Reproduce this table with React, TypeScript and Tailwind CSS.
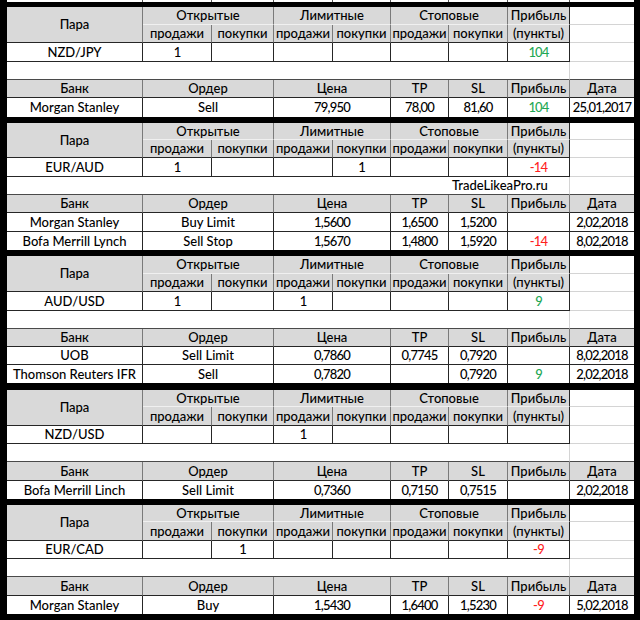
import React from "react";

type CellProps = { c?: string; children?: React.ReactNode };
function Cell({ c = "", children }: CellProps) {
  return (
    <div className={`flex items-center justify-center whitespace-nowrap leading-none ${c}`}>
      {children}
    </div>
  );
}

const COLS = "grid grid-cols-[136px_69px_62px_59px_58px_58px_59px_62px_64px]";
const H1 = "bg-[#d9d9d9] border-r border-r-[#7a7a7a] border-b border-b-[#f0f0f0]";
const H1P = "bg-[#d9d9d9] border-r border-r-[#262626] border-b border-b-[#f0f0f0]";
const H2 = "bg-[#d9d9d9] border-r border-r-[#7a7a7a] border-b border-b-[#262626]";
const H2P = "bg-[#d9d9d9] border-r border-r-[#262626] border-b border-b-[#262626]";
const HD = "bg-[#d9d9d9] border-b border-b-[#262626]";
const D = "bg-white border-r border-r-[#262626] border-b border-b-[#262626]";
const DL = "bg-white border-r border-r-[#262626]";
const DW = "bg-white border-b border-b-[#d4d4d4]";
const NUM = "tracking-[-0.8px]";
const GREEN = "text-[#1fa855]";
const RED = "text-[#ff1f1f]";

type Bank = {
  bank: string;
  order: string;
  price: string;
  tp: string;
  sl: string;
  profit: string;
  pc: string;
  date: string;
};

type BlockProps = {
  rows: string;
  pair: string;
  vals: string[];
  profit: string;
  pc: string;
  note?: string;
  banks: Bank[];
};

function Block({ rows, pair, vals, profit, pc, note, banks }: BlockProps) {
  return (
    <div className={`${COLS} ${rows} shrink-0`}>
      {/* header row 1 */}
      <Cell c="row-span-2 bg-[#d9d9d9] border-r border-r-[#7a7a7a] border-b border-b-[#262626]">Пара</Cell>
      <Cell c={`col-span-2 ${H1}`}>Открытые</Cell>
      <Cell c={`col-span-2 ${H1}`}>Лимитные</Cell>
      <Cell c={`col-span-2 ${H1}`}>Стоповые</Cell>
      <Cell c={H1P}>Прибыль</Cell>
      <Cell c={DW} />
      {/* header row 2 */}
      <Cell c={H2}>продажи</Cell>
      <Cell c={H2}>покупки</Cell>
      <Cell c={H2}>продажи</Cell>
      <Cell c={H2}>покупки</Cell>
      <Cell c={H2}>продажи</Cell>
      <Cell c={H2}>покупки</Cell>
      <Cell c={H2P}>(пункты)</Cell>
      <Cell c={DW} />
      {/* data row */}
      <Cell c={D}>{pair}</Cell>
      {vals.map((v, i) => (
        <Cell key={i} c={`${D} ${NUM}`}>
          {v}
        </Cell>
      ))}
      <Cell c={`${D} ${NUM} ${pc}`}>{profit}</Cell>
      <Cell c={DW} />
      {/* empty row */}
      {note ? (
        <>
          <div className="col-span-6 bg-white border-b border-b-[#4a4a4a]" />
          <div className="col-span-2 bg-white border-r border-r-[#d4d4d4] border-b border-b-[#4a4a4a] flex items-center pl-[3px] whitespace-nowrap leading-none">
            {note}
          </div>
        </>
      ) : (
        <div className="col-span-8 bg-white border-r border-r-[#d4d4d4] border-b border-b-[#4a4a4a]" />
      )}
      <div className="bg-white border-b border-b-[#4a4a4a]" />
      {/* bank header */}
      <Cell c={H2}>Банк</Cell>
      <Cell c={`col-span-2 ${H2}`}>Ордер</Cell>
      <Cell c={`col-span-2 ${H2}`}>Цена</Cell>
      <Cell c={H2}>TP</Cell>
      <Cell c={H2}>SL</Cell>
      <Cell c={H2}>Прибыль</Cell>
      <Cell c={HD}>Дата</Cell>
      {banks.map((b, i) => {
        const last = i === banks.length - 1;
        const cc = last ? DL : D;
        const dc = last ? "bg-white" : "bg-white border-b border-b-[#262626]";
        return (
          <React.Fragment key={i}>
            <Cell c={cc}>{b.bank}</Cell>
            <Cell c={`col-span-2 ${cc}`}>{b.order}</Cell>
            <Cell c={`col-span-2 ${cc} ${NUM}`}>{b.price}</Cell>
            <Cell c={`${cc} ${NUM}`}>{b.tp}</Cell>
            <Cell c={`${cc} ${NUM}`}>{b.sl}</Cell>
            <Cell c={`${cc} ${NUM} ${b.pc}`}>{b.profit}</Cell>
            <Cell c={`${dc} ${NUM}`}>{b.date}</Cell>
          </React.Fragment>
        );
      })}
    </div>
  );
}

export default function App() {
  return (
    <div className="w-[640px] h-[620px] bg-black pl-[7px] pr-[6px] flex flex-col overflow-hidden font-['Lato',sans-serif] font-medium text-[13px] text-black">
      <div className={`${COLS} h-[2px] shrink-0 bg-white`}>
        <div className="border-r border-r-[#555]" />
        <div className="border-r border-r-[#555]" />
        <div className="border-r border-r-[#555]" />
        <div className="border-r border-r-[#555]" />
        <div className="border-r border-r-[#555]" />
        <div className="border-r border-r-[#555]" />
        <div className="border-r border-r-[#555]" />
        <div className="border-r border-r-[#555]" />
        <div />
      </div>
      <div className="mt-[5px]">
        <Block
          rows="grid-rows-[18px_18px_19px_18px_18px_19px]"
          pair="NZD/JPY"
          vals={["1", "", "", "", "", ""]}
          profit="104"
          pc={GREEN}
          banks={[
            { bank: "Morgan Stanley", order: "Sell", price: "79,950", tp: "78,00", sl: "81,60", profit: "104", pc: GREEN, date: "25,01,2017" },
          ]}
        />
      </div>
      <div className="mt-[6px]">
        <Block
          rows="grid-rows-[17px_18px_19px_18px_18px_19px_18px]"
          pair="EUR/AUD"
          vals={["1", "", "", "1", "", ""]}
          profit="-14"
          pc={RED}
          note="TradeLikeaPro.ru"
          banks={[
            { bank: "Morgan Stanley", order: "Buy Limit", price: "1,5600", tp: "1,6500", sl: "1,5200", profit: "", pc: "", date: "2,02,2018" },
            { bank: "Bofa Merrill Lynch", order: "Sell Stop", price: "1,5670", tp: "1,4800", sl: "1,5920", profit: "-14", pc: RED, date: "8,02,2018" },
          ]}
        />
      </div>
      <div className="mt-[6px]">
        <Block
          rows="grid-rows-[18px_18px_19px_18px_18px_18px_18px]"
          pair="AUD/USD"
          vals={["1", "", "1", "", "", ""]}
          profit="9"
          pc={GREEN}
          banks={[
            { bank: "UOB", order: "Sell Limit", price: "0,7860", tp: "0,7745", sl: "0,7920", profit: "", pc: "", date: "8,02,2018" },
            { bank: "Thomson Reuters IFR", order: "Sell", price: "0,7820", tp: "", sl: "0,7920", profit: "9", pc: GREEN, date: "2,02,2018" },
          ]}
        />
      </div>
      <div className="mt-[7px]">
        <Block
          rows="grid-rows-[17px_19px_18px_18px_19px_18px]"
          pair="NZD/USD"
          vals={["", "", "1", "", "", ""]}
          profit=""
          pc=""
          banks={[
            { bank: "Bofa Merrill Linch", order: "Sell Limit", price: "0,7360", tp: "0,7150", sl: "0,7515", profit: "", pc: "", date: "2,02,2018" },
          ]}
        />
      </div>
      <div className="mt-[6px]">
        <Block
          rows="grid-rows-[17px_19px_18px_18px_19px_18px]"
          pair="EUR/CAD"
          vals={["", "1", "", "", "", ""]}
          profit="-9"
          pc={RED}
          banks={[
            { bank: "Morgan Stanley", order: "Buy", price: "1,5430", tp: "1,6400", sl: "1,5230", profit: "-9", pc: RED, date: "5,02,2018" },
          ]}
        />
      </div>
    </div>
  );
}
